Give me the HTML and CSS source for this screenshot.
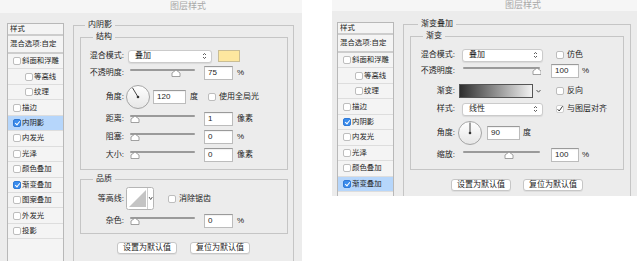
FILE: index.html
```html
<!DOCTYPE html>
<html lang="zh">

<head>
    <meta charset="UTF-8">
    <title>图层样式</title>
    <link rel="stylesheet" href="styles.css">
</head>

<body>
    <!-- 内阴影 dialog -->
    <div class="dialog dialog-a">
        <div class="titlebar">图层样式</div>
        <div class="dialog-body">
            <ul class="styles">
                <li class="head">样式</li>
                <li class="blend">混合选项:自定</li>
                <li><span class="check"></span>斜面和浮雕</li>
                <li class="sub"><span class="check"></span>等高线</li>
                <li class="sub"><span class="check"></span>纹理</li>
                <li><span class="check"></span>描边</li>
                <li class="active"><span class="check on"></span>内阴影</li>
                <li><span class="check"></span>内发光</li>
                <li><span class="check"></span>光泽</li>
                <li><span class="check"></span>颜色叠加</li>
                <li><span class="check on"></span>渐变叠加</li>
                <li><span class="check"></span>图案叠加</li>
                <li><span class="check"></span>外发光</li>
                <li><span class="check"></span>投影</li>
            </ul>

            <fieldset class="outer">
                <legend>内阴影</legend>

                <fieldset class="group">
                    <legend>结构</legend>
                    <div class="row r-first">
                        <label>混合模式:</label>
                        <div class="select">叠加
                            <svg class="updown" width="5" height="8" viewBox="0 0 5 8"><path d="M1 3 L2.5 1.5 L4 3 M1 5 L2.5 6.5 L4 5" fill="none" stroke="#333" stroke-width="0.8"/></svg>
                        </div>
                        <span class="swatch"></span>
                    </div>
                    <div class="row r-gap3">
                        <label>不透明度:</label>
                        <svg class="slider" width="67" height="10" viewBox="0 0 67 10">
                            <rect x="2" y="1" width="65" height="2" rx="1" fill="#9a9a9a"/>
                            <polygon points="48,2 52,5 52,8.5 44,8.5 44,5" fill="#fff" stroke="#8c8c8c" stroke-width="0.8"/>
                        </svg>
                        <span class="field">75</span>
                        <span class="unit">%</span>
                    </div>
                    <div class="row tall r-gap4">
                        <label>角度:</label>
                        <svg class="dial" width="26" height="26" viewBox="0 0 26 26">
                            <defs><linearGradient id="dg" x1="0" y1="0" x2="0" y2="1"><stop offset="0" stop-color="#fff"/><stop offset="1" stop-color="#e6e6e6"/></linearGradient></defs>
                            <circle cx="13" cy="13" r="11.5" fill="url(#dg)" stroke="#9c9c9c" stroke-width="0.9"/>
                            <line x1="13" y1="13" x2="7.5" y2="3.8" stroke="#333" stroke-width="0.9"/>
                            <circle cx="13" cy="13" r="1.3" fill="#333"/>
                        </svg>
                        <span class="field wide">120</span>
                        <span class="unit">度</span>
                        <span class="check opt"></span>
                        <span class="opt-label">使用全局光</span>
                    </div>
                    <div class="row r-gap2">
                        <label>距离:</label>
                        <svg class="slider" width="67" height="10" viewBox="0 0 67 10">
                            <rect x="2" y="1" width="65" height="2" rx="1" fill="#9a9a9a"/>
                            <polygon points="7,2 11,5 11,8.5 3,8.5 3,5" fill="#fff" stroke="#8c8c8c" stroke-width="0.8"/>
                        </svg>
                        <span class="field">1</span>
                        <span class="unit">像素</span>
                    </div>
                    <div class="row r-gap4">
                        <label>阻塞:</label>
                        <svg class="slider" width="67" height="10" viewBox="0 0 67 10">
                            <rect x="2" y="1" width="65" height="2" rx="1" fill="#9a9a9a"/>
                            <polygon points="7,2 11,5 11,8.5 3,8.5 3,5" fill="#fff" stroke="#8c8c8c" stroke-width="0.8"/>
                        </svg>
                        <span class="field">0</span>
                        <span class="unit">%</span>
                    </div>
                    <div class="row r-gap4">
                        <label>大小:</label>
                        <svg class="slider" width="67" height="10" viewBox="0 0 67 10">
                            <rect x="2" y="1" width="65" height="2" rx="1" fill="#9a9a9a"/>
                            <polygon points="7,2 11,5 11,8.5 3,8.5 3,5" fill="#fff" stroke="#8c8c8c" stroke-width="0.8"/>
                        </svg>
                        <span class="field">0</span>
                        <span class="unit">像素</span>
                    </div>
                </fieldset>

                <fieldset class="group quality">
                    <legend>品质</legend>
                    <div class="row contour-row">
                        <label>等高线:</label>
                        <svg class="contour" width="28" height="23" viewBox="0 0 28 23">
                            <rect x="0.5" y="0.5" width="27" height="22" rx="2" fill="#fff" stroke="#b5b5b5"/>
                            <polygon points="3,20 20,3 20,20" fill="#c4c4c4"/>
                            <line x1="21.5" y1="1" x2="21.5" y2="22" stroke="#cfcfcf"/>
                            <path d="M23 10 L24.7 12.5 L26.4 10" fill="none" stroke="#333" stroke-width="0.8"/>
                        </svg>
                        <span class="check opt-wide"></span>
                        <span class="opt-label">消除锯齿</span>
                    </div>
                    <div class="row r-gap4">
                        <label>杂色:</label>
                        <svg class="slider" width="67" height="10" viewBox="0 0 67 10">
                            <rect x="2" y="1" width="65" height="2" rx="1" fill="#9a9a9a"/>
                            <polygon points="7,2 11,5 11,8.5 3,8.5 3,5" fill="#fff" stroke="#8c8c8c" stroke-width="0.8"/>
                        </svg>
                        <span class="field">0</span>
                        <span class="unit">%</span>
                    </div>
                </fieldset>

                <div class="buttons">
                    <button>设置为默认值</button>
                    <button>复位为默认值</button>
                </div>
            </fieldset>
        </div>
    </div>

    <!-- 渐变叠加 dialog -->
    <div class="dialog dialog-b">
        <div class="titlebar">图层样式</div>
        <div class="dialog-body">
            <ul class="styles">
                <li class="head">样式</li>
                <li class="blend">混合选项:自定</li>
                <li><span class="check"></span>斜面和浮雕</li>
                <li class="sub"><span class="check"></span>等高线</li>
                <li class="sub"><span class="check"></span>纹理</li>
                <li><span class="check"></span>描边</li>
                <li><span class="check on"></span>内阴影</li>
                <li><span class="check"></span>内发光</li>
                <li><span class="check"></span>光泽</li>
                <li><span class="check"></span>颜色叠加</li>
                <li class="active"><span class="check on"></span>渐变叠加</li>
            </ul>

            <fieldset class="outer">
                <legend>渐变叠加</legend>

                <fieldset class="group">
                    <legend>渐变</legend>
                    <div class="row r-first">
                        <label>混合模式:</label>
                        <div class="select">叠加
                            <svg class="updown" width="5" height="8" viewBox="0 0 5 8"><path d="M1 3 L2.5 1.5 L4 3 M1 5 L2.5 6.5 L4 5" fill="none" stroke="#333" stroke-width="0.8"/></svg>
                        </div>
                        <span class="check opt"></span>
                        <span class="opt-label">仿色</span>
                    </div>
                    <div class="row r-gap2">
                        <label>不透明度:</label>
                        <svg class="slider" width="79" height="10" viewBox="0 0 79 10">
                            <rect x="1" y="1" width="77" height="2" rx="1" fill="#9a9a9a"/>
                            <polygon points="75,2 79,5 79,8.5 71,8.5 71,5" fill="#fff" stroke="#8c8c8c" stroke-width="0.8"/>
                        </svg>
                        <span class="field">100</span>
                        <span class="unit">%</span>
                    </div>
                    <div class="row r-gap6">
                        <label>渐变:</label>
                        <span class="gradient"></span>
                        <svg class="drop" width="7" height="8" viewBox="0 0 7 8"><path d="M1.5 3 L3.5 5.2 L5.5 3" fill="none" stroke="#333" stroke-width="0.8"/></svg>
                        <span class="check opt"></span>
                        <span class="opt-label">反向</span>
                    </div>
                    <div class="row r-gap4">
                        <label>样式:</label>
                        <div class="select">线性
                            <svg class="updown" width="5" height="8" viewBox="0 0 5 8"><path d="M1 3 L2.5 1.5 L4 3 M1 5 L2.5 6.5 L4 5" fill="none" stroke="#333" stroke-width="0.8"/></svg>
                        </div>
                        <span class="check opt ticked">
                            <svg width="8" height="8" viewBox="0 0 8 8"><path d="M1.6 4.2 L3.2 6 L6.6 1.2" fill="none" stroke="#222" stroke-width="0.9"/></svg>
                        </span>
                        <span class="opt-label">与图层对齐</span>
                    </div>
                    <div class="row tall r-gap4">
                        <label>角度:</label>
                        <svg class="dial" width="26" height="26" viewBox="0 0 26 26">
                            <defs><linearGradient id="dg2" x1="0" y1="0" x2="0" y2="1"><stop offset="0" stop-color="#fff"/><stop offset="1" stop-color="#e6e6e6"/></linearGradient></defs>
                            <circle cx="13" cy="13" r="11.5" fill="url(#dg2)" stroke="#9c9c9c" stroke-width="0.9"/>
                            <line x1="13" y1="13" x2="13" y2="2.5" stroke="#333" stroke-width="0.9"/>
                            <circle cx="13" cy="13" r="1.3" fill="#333"/>
                        </svg>
                        <span class="field wide">90</span>
                        <span class="unit">度</span>
                    </div>
                    <div class="row r-gap2">
                        <label>缩放:</label>
                        <svg class="slider" width="79" height="10" viewBox="0 0 79 10">
                            <rect x="1" y="1" width="77" height="2" rx="1" fill="#9a9a9a"/>
                            <polygon points="47,2 51,5 51,8.5 43,8.5 43,5" fill="#fff" stroke="#8c8c8c" stroke-width="0.8"/>
                        </svg>
                        <span class="field">100</span>
                        <span class="unit">%</span>
                    </div>
                </fieldset>

                <div class="buttons">
                    <button>设置为默认值</button>
                    <button>复位为默认值</button>
                </div>
            </fieldset>
        </div>
    </div>
</body>

</html>
```

FILE: styles.css
```css
* {
    box-sizing: border-box;
}

body {
    margin: 0;
    display: flex;
    align-items: flex-start;
    gap: 30px;
    background: #fff;
    font-family: "Liberation Sans", "Noto Sans CJK SC", sans-serif;
    font-size: 8px;
    color: #1e1e1e;
}

/* Dialog frame */
.dialog {
    background: #ececec;
    overflow: hidden;
}

.dialog-a {
    width: 302px;
    height: 261px;
}

.dialog-b {
    width: 305px;
    height: 196px;
}

.titlebar {
    background: #f6f6f6;
    color: #a8a8a8;
    font-size: 9px;
    line-height: 13px;
    height: 13px;
    padding-left: 170px;
}

.dialog-b .titlebar {
    height: 11px;
    line-height: 11px;
    padding-left: 173px;
}

.dialog-body {
    display: flex;
    align-items: flex-start;
}

/* Style list on the left */
.styles {
    list-style: none;
    margin: 10px 0 0 7px;
    padding: 0;
    width: 57px;
    height: 260px;
    flex-shrink: 0;
    font-size: 7.4px;
    background: #f4f4f4;
    border: 1px solid #b8b8b8;
    overflow: hidden;
}

.dialog-b .styles {
    margin: 11px 0 0 5px;
}

.styles li {
    display: flex;
    align-items: center;
    height: 15.45px;
    line-height: 12px;
    padding-left: 5px;
    border-bottom: 1px solid #dddddd;
    white-space: nowrap;
}

.styles li.head {
    height: 12px;
    padding-left: 2px;
    border-bottom: 2px solid #cdcdcd;
}

.styles li.blend {
    height: 18px;
    padding-left: 2px;
    border-bottom: 2px solid #cdcdcd;
}

.styles li.sub {
    padding-left: 17px;
}

.styles li.active {
    background: #b6d6fb;
}

.styles .check {
    margin-right: 1px;
}

.check {
    display: inline-block;
    width: 8px;
    height: 8px;
    margin-right: 2px;
    flex-shrink: 0;
    background: #fff;
    border: 1px solid #bdbdbd;
    border-radius: 2px;
}

.check.on {
    background: #3a8ced;
    border-color: #2f79d6;
    position: relative;
}

.check.on::after {
    content: "";
    position: absolute;
    left: 2px;
    top: 0;
    width: 2px;
    height: 4px;
    border: solid #fff;
    border-width: 0 1px 1px 0;
    transform: rotate(40deg);
}

.check.ticked {
    border-color: #cfcfcf;
}

.check.ticked svg {
    display: block;
    margin: -1px 0 0 -1px;
}

/* Fieldsets */
fieldset {
    margin: 0;
    padding: 0;
    min-width: 0;
    border: 1px solid #c5c5c5;
}

legend {
    padding: 0 3px;
    line-height: 12px;
    font-size: 8px;
}

.outer {
    margin: 6px 0 0 9px;
    width: 221px;
    height: 260px;
    flex-shrink: 0;
}

.outer > legend {
    margin-left: 11px;
}

.dialog-b .outer {
    margin: 7px 0 0 9px;
    width: 228px;
}

.dialog-b .outer > legend {
    margin-left: 14px;
}

.group {
    margin-left: 6px;
    width: 208px;
    padding: 5px 0 7px;
}

.group > legend {
    margin-left: 12px;
}

.dialog-b .group {
    width: 214px;
    padding: 5px 0 7px;
}

.quality {
    margin-top: 3px;
    padding: 2px 0 5px;
}

/* Rows */
.row {
    display: flex;
    align-items: center;
    height: 14px;
    line-height: 12px;
    white-space: nowrap;
}

.row.tall {
    height: 26px;
}

.row.contour-row {
    height: 23px;
}

.r-first {
    margin-top: 1px;
}

.r-gap2 {
    margin-top: 2px;
}

.r-gap3 {
    margin-top: 3px;
}

.r-gap4 {
    margin-top: 4px;
}

.r-gap6 {
    margin-top: 6px;
}

.row label {
    width: 43px;
    margin-right: 4px;
    text-align: right;
    flex-shrink: 0;
}

.dialog-b .row label {
    width: 44px;
    margin-right: 7px;
}

.select {
    display: flex;
    align-items: center;
    justify-content: space-between;
    width: 84px;
    height: 13px;
    padding: 0 4px 0 6px;
    background: #fff;
    border: 1px solid #cbcbcb;
    border-radius: 3px;
    box-shadow: 0 1px 1px rgba(0, 0, 0, 0.08);
}

.dialog-b .select {
    width: 81px;
}

.swatch {
    width: 22px;
    height: 12px;
    margin-left: 6px;
    background: #fde79f;
    border: 1px solid #c9bd95;
}

.slider {
    display: block;
    flex-shrink: 0;
}

.field {
    width: 29px;
    height: 14px;
    margin-left: 9px;
    padding-left: 3px;
    line-height: 12px;
    background: #fff;
    border: 1px solid #bcbcbc;
    border-top-color: #9a9a9a;
    box-shadow: inset 0 1px 1px rgba(0, 0, 0, 0.06);
}

.dialog-b .field {
    width: 28px;
    margin-left: 10px;
}

.field.wide {
    width: 33px;
    margin-left: 2px;
}

.dialog-b .field.wide {
    margin-left: 4px;
}

.unit {
    margin-left: 4px;
}

.dialog-b .unit {
    margin-left: 3px;
}

.dial {
    display: block;
    margin-left: -3px;
}

.dialog-b .dial {
    margin-left: -5px;
}

.check.opt {
    margin: 0 0 0 10px;
}

.dialog-b .check.opt {
    margin-left: 13px;
}

.check.opt-wide {
    margin: 0 0 0 14px;
}

.opt-label {
    margin-left: 3px;
}

.contour {
    display: block;
    margin-left: -2px;
}

.gradient {
    width: 74px;
    height: 14px;
    margin-left: -3px;
    border: 1px solid #555;
    background: linear-gradient(to right, #2e2e2e, #f2f2f2);
}

.drop {
    display: block;
    margin-left: 2px;
}

.dialog-b .drop + .check.opt {
    margin-left: 14px;
}

/* Buttons */
.buttons {
    display: flex;
    justify-content: center;
    gap: 13px;
    margin-top: 8px;
}

.dialog-b .buttons {
    gap: 12px;
    margin-top: 9px;
}

button {
    width: 60px;
    height: 12px;
    padding: 0;
    font-family: inherit;
    font-size: 8px;
    line-height: 10px;
    color: #222;
    background: #fff;
    border: 1px solid #c6c6c6;
    border-radius: 3px;
    box-shadow: 0 1px 0 rgba(0, 0, 0, 0.06);
}
```
